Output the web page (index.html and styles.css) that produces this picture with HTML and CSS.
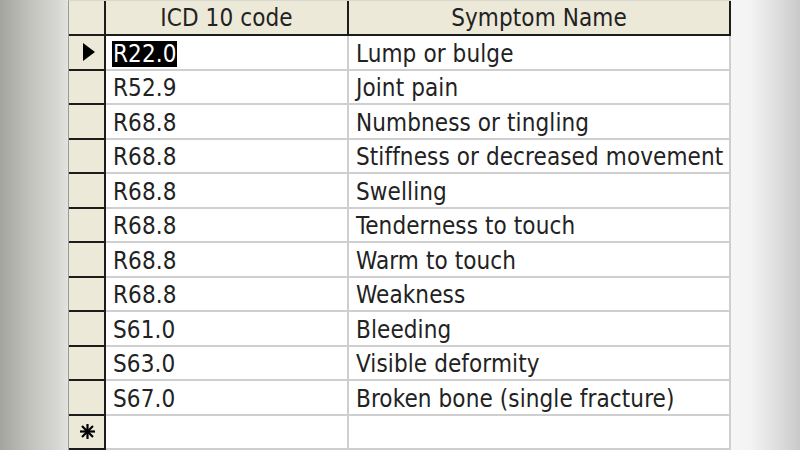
FILE: index.html
```html
<!DOCTYPE html>
<html>
<head>
<meta charset="utf-8">
<link rel="stylesheet" href="styles.css">
</head>
<body>
<div class="stage">
  <div class="sheet">
    <div class="sel hdr-corner"></div>
    <div class="hdr">ICD 10 code</div>
    <div class="hdr last">Symptom Name</div>

    <div class="sel"><svg class="arrow" viewBox="0 0 12 18" width="12" height="18"><path d="M0 0 L12 9 L0 18 Z" fill="#000"/></svg></div>
    <div class="cell"><span class="hl">R22.0</span></div>
    <div class="cell last">Lump or bulge</div>

    <div class="sel"></div><div class="cell">R52.9</div><div class="cell last">Joint pain</div>
    <div class="sel"></div><div class="cell">R68.8</div><div class="cell last">Numbness or tingling</div>
    <div class="sel"></div><div class="cell">R68.8</div><div class="cell last">Stiffness or decreased movement</div>
    <div class="sel"></div><div class="cell">R68.8</div><div class="cell last">Swelling</div>
    <div class="sel"></div><div class="cell">R68.8</div><div class="cell last">Tenderness to touch</div>
    <div class="sel"></div><div class="cell">R68.8</div><div class="cell last">Warm to touch</div>
    <div class="sel"></div><div class="cell">R68.8</div><div class="cell last">Weakness</div>
    <div class="sel"></div><div class="cell">S61.0</div><div class="cell last">Bleeding</div>
    <div class="sel"></div><div class="cell">S63.0</div><div class="cell last">Visible deformity</div>
    <div class="sel"></div><div class="cell">S67.0</div><div class="cell last">Broken bone (single fracture)</div>

    <div class="sel newrow"><svg class="star" viewBox="0 0 17 15" width="17" height="15"><g stroke="#000" stroke-width="2.2" stroke-linecap="butt"><line x1="8.5" y1="0" x2="8.5" y2="15"/><line x1="1" y1="7.5" x2="16" y2="7.5"/><line x1="3" y1="2" x2="14" y2="13"/><line x1="14" y1="2" x2="3" y2="13"/></g></svg></div>
    <div class="cell"></div>
    <div class="cell last"></div>
  </div>
</div>
</body>
</html>
```
FILE: styles.css
```css
html, body {
  margin: 0;
  padding: 0;
}
body {
  width: 800px;
  height: 450px;
  overflow: hidden;
  background: linear-gradient(to right, #a4a49e 0px, #c2c2bd 30px, #d9d9d5 60px, #e4e4e1 69px, #f6f6f6 730px, #f3f3f3 750px, #dcdcdc 780px, #c9c9c9 800px);
  font-family: "DejaVu Sans Condensed", "DejaVu Sans", sans-serif;
}
.stage {
  display: flex;
  padding-left: 68px;
  padding-top: 0;
}
.sheet {
  display: grid;
  grid-template-columns: 37px 243px 382px;
  grid-template-rows: 35px repeat(12, 34.5px);
  background: #fff;
  border-left: 1px solid #9a9a96;
  border-top: 1px solid #d8d8d0;
}
.sel {
  background: #ece9d8;
  border-right: 2px solid #1c1c1c;
  border-bottom: 2px solid #1c1c1c;
  display: flex;
  align-items: center;
  justify-content: center;
}
.hdr {
  background: #ece9d8;
  border-right: 2px solid #1c1c1c;
  border-bottom: 2px solid #1c1c1c;
  font-size: 24px;
  letter-spacing: 0.1px;
  color: #222;
  display: flex;
  align-items: center;
  justify-content: center;
  padding-top: 1px;
}
.cell {
  border-right: 2px solid #cfcfcf;
  border-bottom: 2px solid #cfcfcf;
  font-size: 24px;
  letter-spacing: 0.1px;
  color: #222;
  display: flex;
  align-items: center;
  padding-left: 7px;
  padding-top: 3px;
  white-space: nowrap;
}
.hl {
  background: #000;
  color: #fff;
  padding: 0 0 0 1px;
  margin-left: -1px;
  line-height: 26px;
}
.arrow {
  margin-left: 4px;
}
.star {
  margin-left: 1px;
}
```
